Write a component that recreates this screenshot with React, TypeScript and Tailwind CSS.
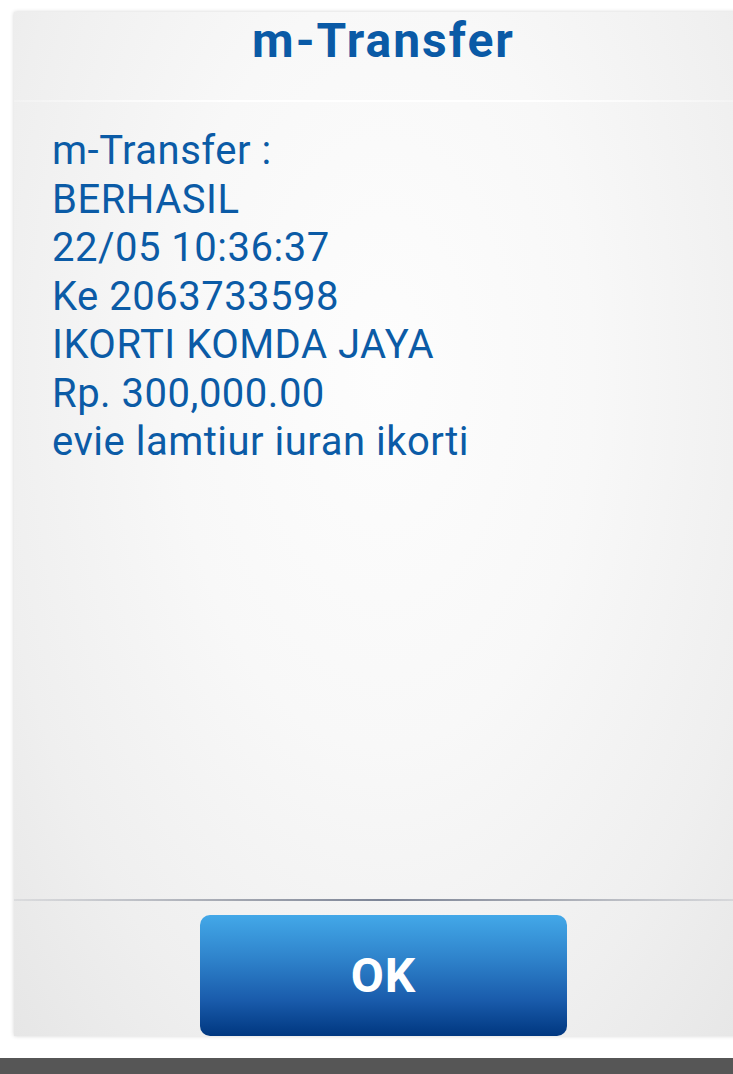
const lines = [
  'm-Transfer :',
  'BERHASIL',
  '22/05 10:36:37',
  'Ke 2063733598',
  'IKORTI KOMDA JAYA',
  'Rp. 300,000.00',
  'evie lamtiur iuran ikorti',
];

export default function App() {
  return (
    <div className="w-[733px] h-[1074px] bg-white flex flex-col overflow-hidden font-['Roboto',sans-serif]">
      {/* dialog card */}
      <div className="ml-[14px] mt-[12px] w-[739px] h-[1024px] shrink-0 flex flex-col bg-[radial-gradient(ellipse_at_50%_35%,#fdfdfd_0%,#f8f8f8_40%,#efefef_75%,#e6e6e6_100%)] shadow-[0_0_4px_rgba(0,0,0,0.18)]">
        <div className="h-[88px] pt-[5px] text-center">
          <h1 className="text-[48px] leading-none font-bold tracking-[2px] text-[#0a5aa6]">m-Transfer</h1>
        </div>
        <div className="h-[2px] bg-[linear-gradient(to_right,rgba(255,255,255,0.2),#ffffff_30%,#ffffff_70%,rgba(255,255,255,0.2))]" />

        <div className="pt-[25px] pl-[38px] text-[40px] leading-[48.5px] tracking-[0.5px] text-[#0b5ba6]">
          {lines.map((l) => (
            <div key={l}>{l}</div>
          ))}
        </div>

        <div className="flex-1" />

        <div className="h-[2px] bg-[linear-gradient(to_right,rgba(160,164,174,0.2),#a2a6b0_30%,#7c8496_50%,#a2a6b0_70%,rgba(160,164,174,0.2))]" />

        <div className="flex justify-center pt-[14px]">
          <button className="w-[367px] h-[121px] rounded-[10px] bg-[linear-gradient(to_bottom,#43a8e8_0%,#2f84cc_35%,#1a5cac_70%,#003780_100%)] text-white text-[48px] font-bold tracking-[1px]">
            OK
          </button>
        </div>
      </div>

      <div className="flex-1" />
      <div className="h-[16px] bg-[#565656]" />
    </div>
  );
}
